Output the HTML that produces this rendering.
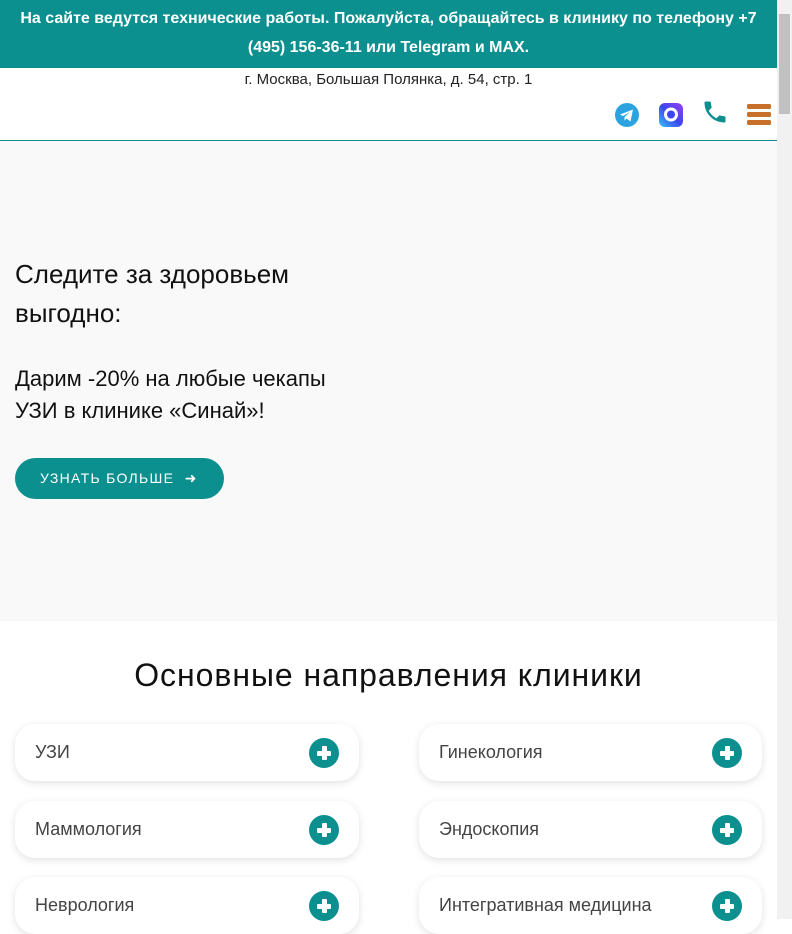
<!DOCTYPE html>
<html><head><meta charset="utf-8"><style>
*{box-sizing:border-box;margin:0;padding:0}
body{width:792px;height:919px;overflow:hidden;font-family:"Liberation Sans",sans-serif;background:#fff;position:relative}
.page{width:777px;position:absolute;left:0;top:0}
.top{background:#0b8f8f;color:#fff;font-weight:bold;font-size:16px;line-height:29px;text-align:center;height:68px;padding-top:4px}
.hdr{height:73px;border-bottom:1.5px solid #0b8f8f;position:relative;box-shadow:0 3px 5px rgba(0,0,0,.06)}
.addr{text-align:center;font-size:15px;color:#222;padding-top:3px}
.ic{position:absolute;top:35px}
.hero{background:#f9f9f9;height:480px;position:relative}
.h1{position:absolute;left:15px;top:114px;font-size:26px;line-height:39px;color:#111}
.h2{position:absolute;left:15px;top:222px;font-size:22px;line-height:32px;color:#111}
.btn{position:absolute;left:15px;top:317px;width:209px;height:41px;border-radius:21px;background:#0b8f8f;color:#fff;font-size:14px;letter-spacing:1.3px;line-height:41px;padding-left:25px}
h2{font-weight:normal;text-align:center;font-size:32px;letter-spacing:0.95px;margin-top:36px;color:#111}
.card{position:absolute;width:344px;height:57px;border-radius:20px;background:#fff;box-shadow:0 2px 8px rgba(0,0,0,.12);font-size:18px;color:#444;line-height:57px;padding-left:20px}
.card.r{width:343px}
.plus{position:absolute;right:20px;top:14px;width:30px;height:30px;border-radius:50%;background:#0b8f8f}
.plus:before{content:"";position:absolute;left:8px;top:12.5px;width:14px;height:5px;background:#fff;border-radius:1px}
.plus:after{content:"";position:absolute;left:12.5px;top:8px;width:5px;height:14px;background:#fff;border-radius:1px}
.sb{position:absolute;left:777px;top:0;width:15px;height:919px;background:#f1f1f1}
.sb div{position:absolute;left:2px;top:14px;width:11px;height:100px;background:#c1c1c1}
</style></head><body>
<div class="page">
<div class="top">На сайте ведутся технические работы. Пожалуйста, обращайтесь в клинику по телефону +7<br>(495) 156-36-11 или Telegram и MAX.</div>
<div class="hdr">
<div class="addr">г. Москва, Большая Полянка, д. 54, стр. 1</div>
<svg class="ic" style="left:615px" width="24" height="24"><circle cx="12" cy="12" r="12" fill="#2aa3e0"/><path d="M5 11.5l13-5-2.5 12-4-3-2 2v-3.5l5.5-5-7 4z" fill="#fff"/></svg>
<svg class="ic" style="left:659px" width="24" height="24"><defs><linearGradient id="g" x1="0" y1="1" x2="1" y2="0"><stop offset="0" stop-color="#36c4f5"/><stop offset=".5" stop-color="#3b46f0"/><stop offset="1" stop-color="#9b3ef0"/></linearGradient></defs><rect width="24" height="24" rx="6" fill="url(#g)"/><path d="M12 4.5a7 7 0 1 0 0 14a7 7 0 0 0 0-14z M7 19.5l1-3" fill="#fff"/><circle cx="12" cy="11.5" r="4" fill="#3b46f0"/></svg>
<svg class="ic" style="left:701px;top:30px" width="28" height="28" viewBox="0 0 24 24"><path d="M6.6 10.8c1.4 2.8 3.8 5.1 6.6 6.6l2.2-2.2c.3-.3.7-.4 1-.2 1.1.4 2.3.6 3.6.6.6 0 1 .4 1 1V20c0 .6-.4 1-1 1C10.6 21 3 13.4 3 4c0-.6.4-1 1-1h3.5c.6 0 1 .4 1 1 0 1.3.2 2.5.6 3.6.1.3 0 .7-.2 1z" fill="#0b8f8f"/></svg>
<svg class="ic" style="left:747px;top:36px" width="24" height="21"><rect y="0" width="24" height="5" rx="1.5" fill="#c86f2b"/><rect y="8" width="24" height="5" rx="1.5" fill="#c86f2b"/><rect y="16" width="24" height="5" rx="1.5" fill="#c86f2b"/></svg>
</div>
<div class="hero">
<div class="h1">Следите за здоровьем<br>выгодно:</div>
<div class="h2">Дарим -20% на любые чекапы<br>УЗИ в клинике «Синай»!</div>
<div class="btn">УЗНАТЬ БОЛЬШЕ &nbsp;➜</div>
</div>
<h2>Основные направления клиники</h2>
</div>
<div class="card" style="left:15px;top:724px">УЗИ<span class="plus"></span></div>
<div class="card r" style="left:419px;top:724px">Гинекология<span class="plus"></span></div>
<div class="card" style="left:15px;top:801px">Маммология<span class="plus"></span></div>
<div class="card r" style="left:419px;top:801px">Эндоскопия<span class="plus"></span></div>
<div class="card" style="left:15px;top:877px">Неврология<span class="plus"></span></div>
<div class="card r" style="left:419px;top:877px">Интегративная медицина<span class="plus"></span></div>
<div class="sb"><div></div></div>
</body></html>
